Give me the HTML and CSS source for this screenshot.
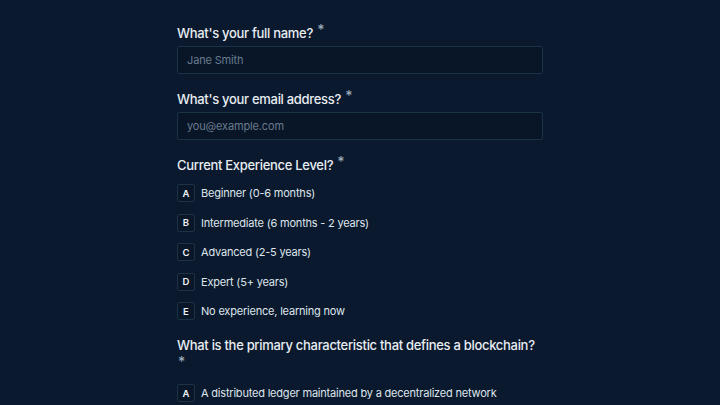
FILE: index.html
```html
<!DOCTYPE html>
<html lang="en">
<head>
<meta charset="utf-8">
<link rel="stylesheet" href="styles.css">
</head>
<body>
<main class="form">
  <section class="field">
    <label class="label" for="name">What's your full name? <span class="req">*</span></label>
    <input class="input" id="name" type="text" placeholder="Jane Smith">
  </section>
  <section class="field">
    <label class="label" for="email">What's your email address? <span class="req">*</span></label>
    <input class="input" id="email" type="email" placeholder="you@example.com">
  </section>
  <section class="field">
    <div class="label">Current Experience Level? <span class="req">*</span></div>
    <ul class="options">
      <li class="option"><span class="key">A</span><span class="text">Beginner (0-6 months)</span></li>
      <li class="option"><span class="key">B</span><span class="text">Intermediate (6 months - 2 years)</span></li>
      <li class="option"><span class="key">C</span><span class="text">Advanced (2-5 years)</span></li>
      <li class="option"><span class="key">D</span><span class="text">Expert (5+ years)</span></li>
      <li class="option"><span class="key">E</span><span class="text">No experience, learning now</span></li>
    </ul>
  </section>
  <section class="field">
    <div class="label">What is the primary characteristic that defines a blockchain? <span class="req">*</span></div>
    <ul class="options">
      <li class="option"><span class="key">A</span><span class="text">A distributed ledger maintained by a decentralized network</span></li>
      <li class="option"><span class="key">B</span><span class="text">A centralized database controlled by a single authority</span></li>
    </ul>
  </section>
</main>
</body>
</html>
```

FILE: styles.css
```css
html, body {
  margin: 0;
  padding: 0;
  background: #0a192d;
  height: 100%;
  overflow: hidden;
}
body {
  font-family: Inter, "Noto Sans", sans-serif;
  color: #e6ebf1;
}
.form {
  width: 366px;
  margin: 0 auto;
  padding-top: 23px;
  display: flex;
  flex-direction: column;
  gap: 15px;
}
.field {
  display: flex;
  flex-direction: column;
}
.label {
  font-size: 13px;
  font-weight: 500;
  line-height: 20px;
  letter-spacing: -0.3px;
  color: #e8edf3;
  margin-bottom: 3px;
}
.req {
  color: #9aa8b8;
  font-size: 14px;
  line-height: 0;
  vertical-align: 3px;
  margin-left: 1px;
}
.input {
  box-sizing: border-box;
  width: 100%;
  height: 28px;
  margin: 0;
  padding: 0 9px;
  background: #081628;
  border: 1px solid #1a3246;
  border-radius: 2px;
  font-family: inherit;
  font-size: 11px;
  letter-spacing: -0.15px;
  color: #e6ebf1;
  outline: none;
}
.input::placeholder {
  color: #6a7b8e;
}
.options {
  list-style: none;
  margin: 6px 0 0;
  padding: 0;
  display: flex;
  flex-direction: column;
  gap: 11.5px;
}
.option {
  display: flex;
  align-items: center;
  gap: 6px;
  height: 18px;
}
.key {
  box-sizing: border-box;
  flex: none;
  width: 18px;
  height: 18px;
  display: flex;
  align-items: center;
  justify-content: center;
  border: 1px solid #1c3246;
  border-radius: 2px;
  background: #091729;
  font-size: 9.5px;
  font-weight: 600;
  color: #eef2f6;
}
.text {
  font-size: 11px;
  letter-spacing: -0.2px;
  color: #dfe5ec;
}
```
